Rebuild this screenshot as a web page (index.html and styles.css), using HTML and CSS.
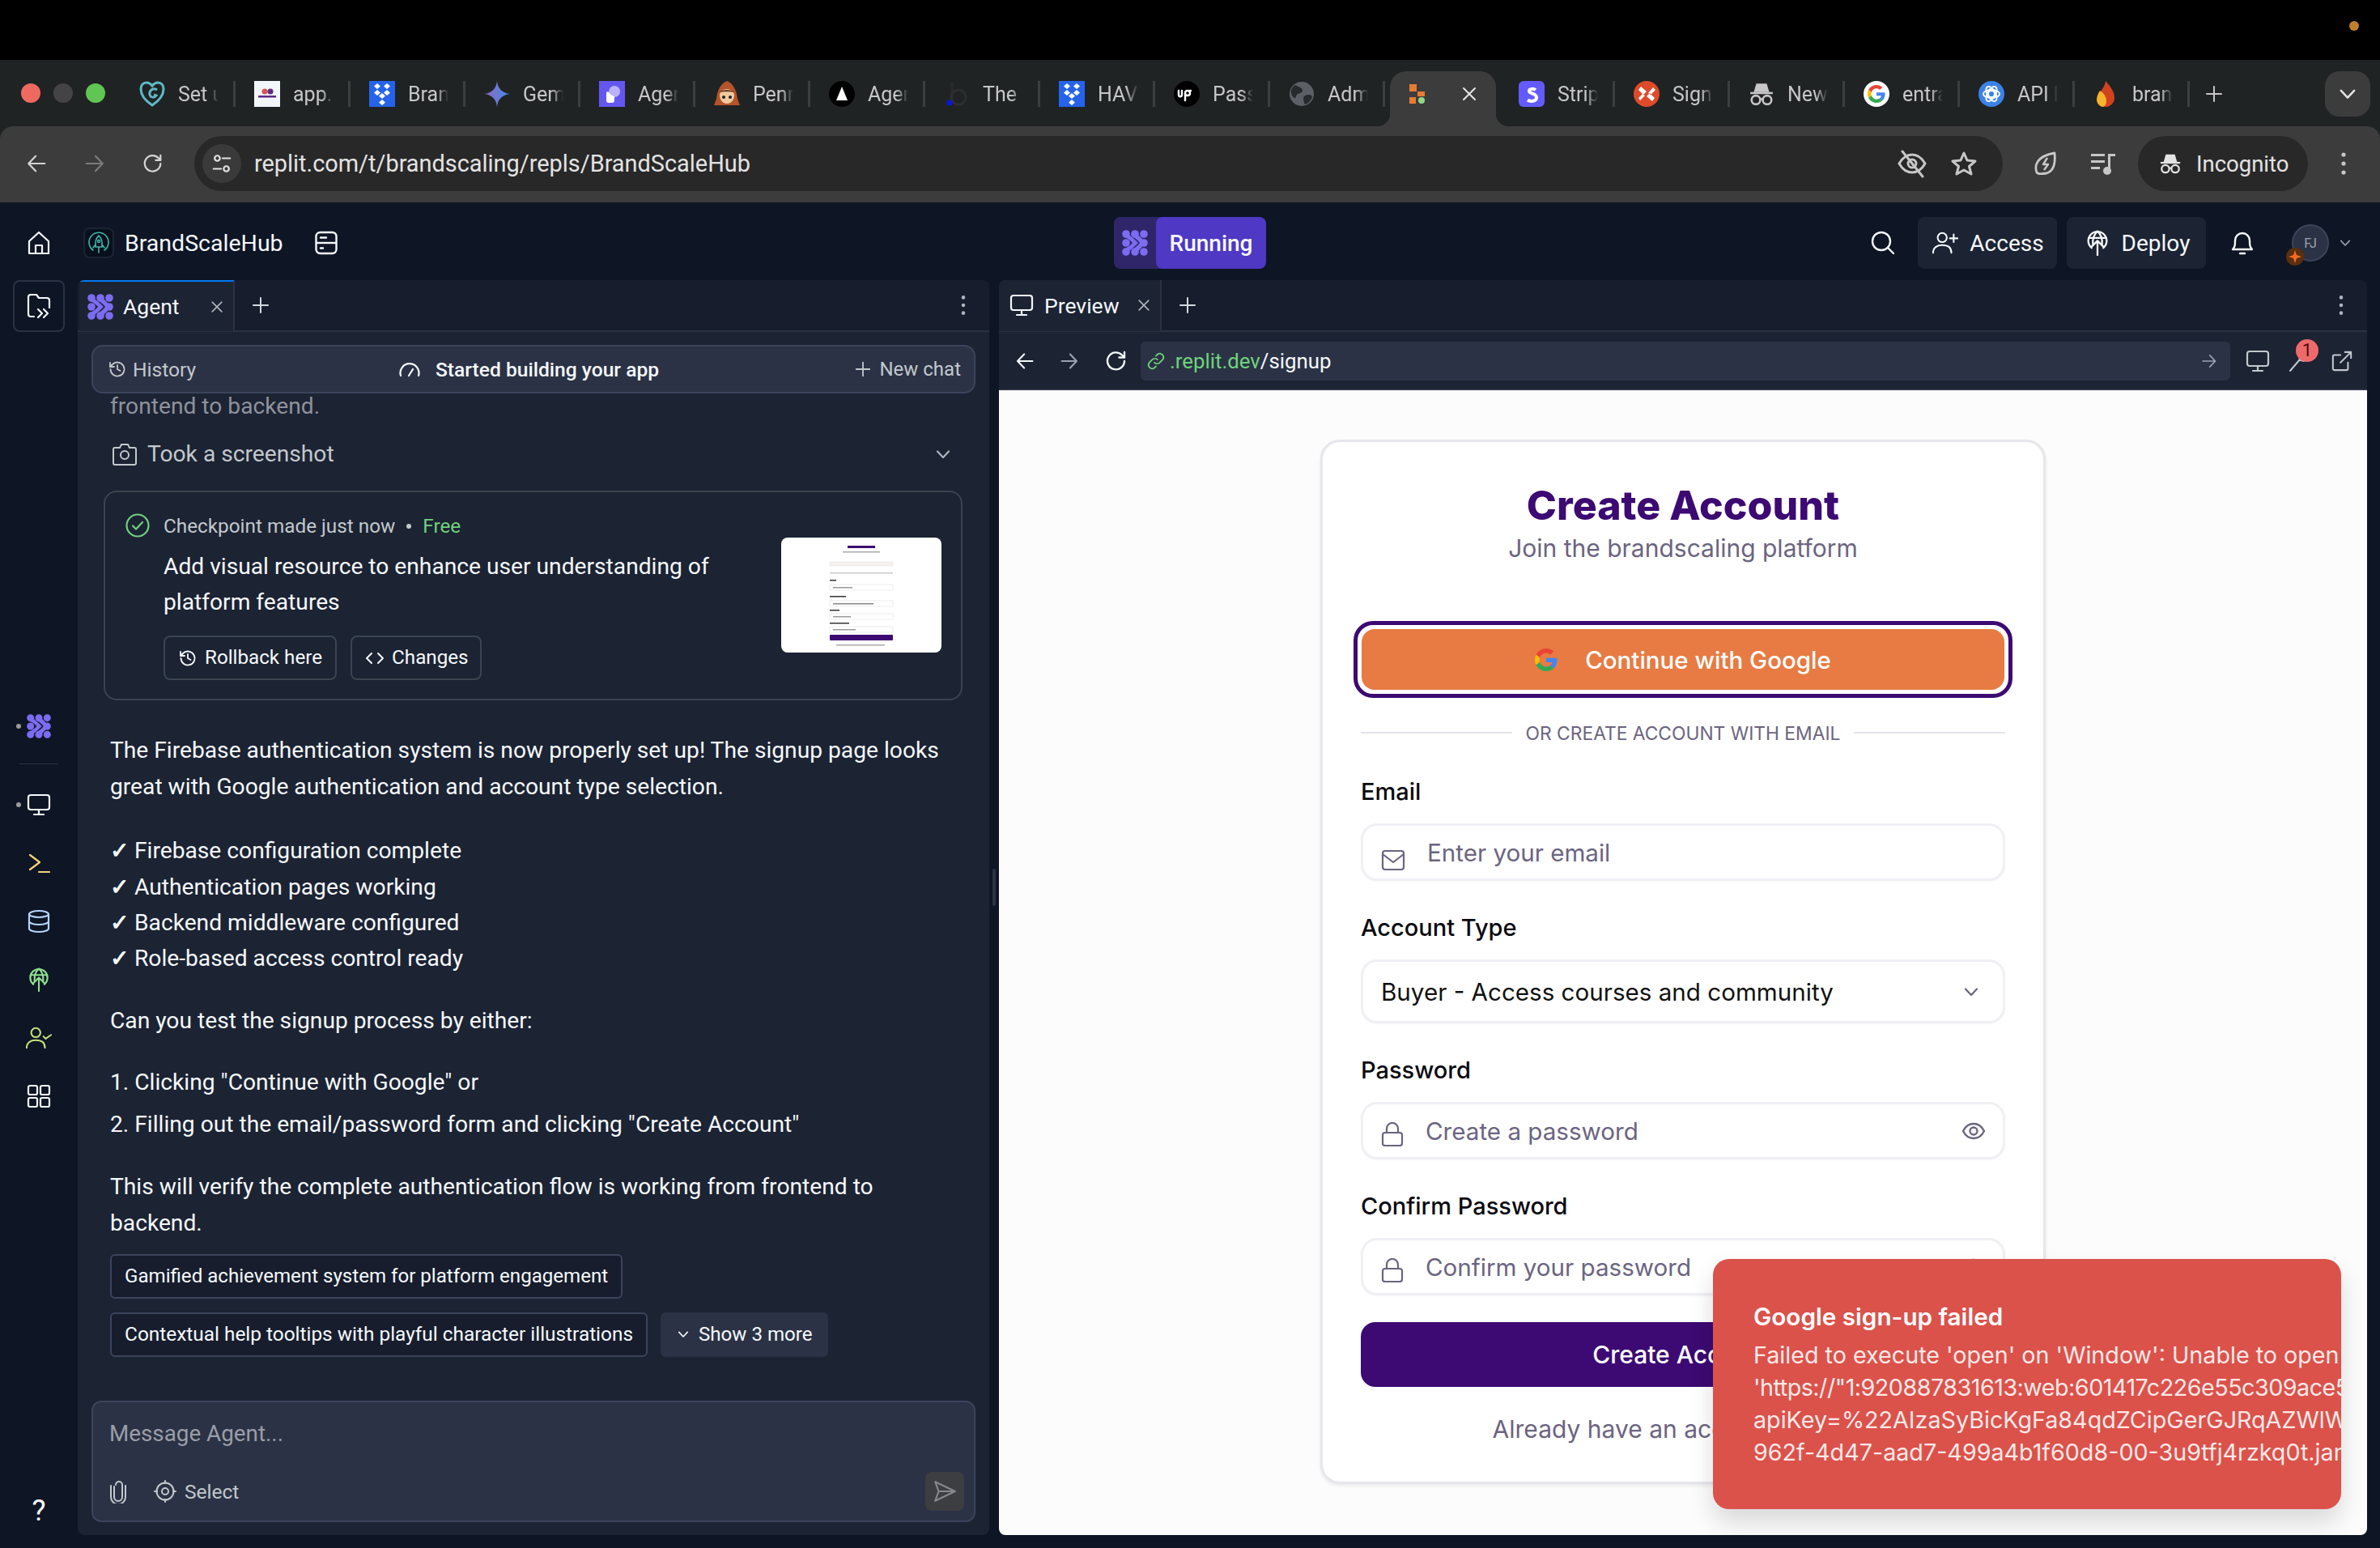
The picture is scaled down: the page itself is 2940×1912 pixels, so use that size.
FILE: index.html
```html
<!DOCTYPE html>
<html lang="en">
<head>
  <meta charset="UTF-8" />
  <title>BrandScaleHub - Replit</title>
  <link rel="stylesheet" href="styles.css">
</head>
<body>
  <svg class="defs" width="0" height="0">
    <defs>
      <symbol id="agent" viewBox="0 0 32 32">
        <g fill="currentColor">
          <circle cx="5" cy="5" r="4.8"/><circle cx="16" cy="5" r="4.8"/><circle cx="27" cy="5" r="4.8"/>
          <circle cx="5" cy="16" r="4.8"/><circle cx="27" cy="16" r="4.8"/>
          <circle cx="5" cy="27" r="4.8"/><circle cx="16" cy="27" r="4.8"/><circle cx="27" cy="27" r="4.8"/>
          <path d="M2 8c2-3 6-3 8-1 4 3 7 6 10 9-3 3-6 6-10 9-2 2-6 2-8-1 5-3 9-5 11-8-2-3-6-5-11-8z"/>
          <path d="M13 8c2-3 6-3 8-1 3 3 6 6 8 9-2 3-5 6-8 9-2 2-6 2-8-1 4-3 7-5 9-8-2-3-5-5-9-8z"/>
        </g>
      </symbol>
      <symbol id="dbx" viewBox="0 0 32 32">
        <rect width="32" height="32" fill="#2563eb"/>
        <g fill="#fff"><path d="M10 3l4 3.5-4 3.5-4-3.5zM22 3l4 3.5-4 3.5-4-3.5zM10 11l4 3.5-4 3.5-4-3.5zM22 11l4 3.5-4 3.5-4-3.5zM16 15l4 3.5-4 3.5-4-3.5zM16 23l4 3.5-4 3.5-4-3.5z"/></g>
      </symbol>
      <symbol id="monitor" viewBox="0 0 30 30" fill="none" stroke="currentColor" stroke-width="2.2" stroke-linejoin="round" stroke-linecap="round">
        <rect x="2" y="3" width="26" height="18" rx="3"/><path d="M15 21v6M9 27h12"/>
      </symbol>
      <symbol id="deploy" viewBox="0 0 24 31" fill="none" stroke="currentColor" stroke-width="2.2" stroke-linejoin="round" stroke-linecap="round">
        <path d="M5 21.500A11 11 0 1 1 19 21.500"/><path d="M1.500 9.500h21"/><path d="M6.500 17C6 10 8 5 12 1.500c4 3.500 6 8.500 5.500 15.500"/><path d="M12 30V13M5 20l7-7 7 7"/>
      </symbol>
      <symbol id="history" viewBox="0 0 24 24" fill="none" stroke="currentColor" stroke-width="1.8" stroke-linecap="round" stroke-linejoin="round">
        <path d="M3.500 12a8.500 8.500 0 1 0 2.500-6L3 9"/><path d="M3 4v5h5"/><path d="M12 7v5l3.500 2"/>
      </symbol>
      <symbol id="lock" viewBox="0 0 28 30" fill="none" stroke="currentColor" stroke-width="2.2" stroke-linecap="round" stroke-linejoin="round">
        <rect x="2" y="13" width="24" height="16" rx="3"/><path d="M7 13V8a7 7 0 0 1 14 0v5"/>
      </symbol>
      <symbol id="eye" viewBox="0 0 30 30" fill="none" stroke="currentColor" stroke-width="2.4" stroke-linecap="round" stroke-linejoin="round">
        <path d="M2 15c3-6 8-9 13-9s10 3 13 9c-3 6-8 9-13 9S5 21 2 15z"/><circle cx="15" cy="15" r="4.5"/>
      </symbol>
      <symbol id="chev" viewBox="0 0 24 24" fill="none" stroke="currentColor" stroke-width="2.2" stroke-linecap="round" stroke-linejoin="round">
        <path d="M5 8.500l7 7.500 7-7.500"/>
      </symbol>
      <symbol id="close" viewBox="0 0 24 24" fill="none" stroke="currentColor" stroke-width="2" stroke-linecap="round">
        <path d="M5 5l14 14M19 5L5 19"/>
      </symbol>
      <symbol id="plus" viewBox="0 0 24 24" fill="none" stroke="currentColor" stroke-width="2" stroke-linecap="round">
        <path d="M12 3v18M3 12h18"/>
      </symbol>
      <symbol id="dots" viewBox="0 0 8 32" fill="currentColor">
        <circle cx="4" cy="5" r="2.6"/><circle cx="4" cy="16" r="2.6"/><circle cx="4" cy="27" r="2.6"/>
      </symbol>
      <symbol id="left" viewBox="0 0 28 28" fill="none" stroke="currentColor" stroke-width="2.4" stroke-linecap="round" stroke-linejoin="round">
        <path d="M25 14H4M13 4L3.500 14 13 24"/>
      </symbol>
      <symbol id="reload" viewBox="0 0 28 28" fill="none" stroke="currentColor" stroke-width="2.4" stroke-linecap="round" stroke-linejoin="round">
        <path d="M24 14a10.500 10.500 0 1 1-3-7.500l3 3"/><path d="M24 3v6.500h-6.500"/>
      </symbol>
      <symbol id="spy" viewBox="0 0 30 30">
        <path d="M9 3h12l3 10H6z" fill="currentColor"/><path d="M2 14h26" stroke="currentColor" stroke-width="2.4"/>
        <g fill="none" stroke="currentColor" stroke-width="2.4"><circle cx="8.500" cy="22" r="5"/><circle cx="21.500" cy="22" r="5"/><path d="M13 21h4"/></g>
      </symbol>
      <symbol id="glogo" viewBox="0 0 48 48">
        <path fill="#ea4335" d="M24 9.500c3.500 0 6.700 1.300 9.100 3.500l6.800-6.800C35.800 2.400 30.300 0 24 0 14.600 0 6.500 5.400 2.600 13.200l7.900 6.200C12.400 13.700 17.700 9.500 24 9.500z"/>
        <path fill="#4285f4" d="M47 24.500c0-1.600-.1-3.100-.4-4.500H24v9h12.900c-.6 3-2.200 5.500-4.800 7.200l7.700 6C44.400 38 47 31.800 47 24.500z"/>
        <path fill="#fbbc05" d="M10.500 28.600c-.5-1.400-.8-3-.8-4.600s.3-3.200.8-4.600l-7.900-6.200C1 16.500 0 20.100 0 24s1 7.500 2.600 10.800z"/>
        <path fill="#34a853" d="M24 48c6.500 0 11.900-2.100 15.800-5.800l-7.700-6c-2.100 1.400-4.900 2.300-8.100 2.300-6.300 0-11.600-4.200-13.500-9.900l-7.900 6.200C6.500 42.600 14.600 48 24 48z"/>
      </symbol>
    </defs>
  </svg>

  <div class="notch"><span class="cam-dot"></span></div>

  <div class="browser">
    <div class="tabstrip">
      <div class="lights"><i class="red"></i><i class="off"></i><i class="green"></i></div>
      <div class="tab"><svg class="fav" viewBox="0 0 32 32" fill="none" stroke="#5fb9c6" stroke-width="3"><path d="M16 30C7 24 2 17 2 10c0-5 3-8 7-8 3 0 5 1.500 7 4 2-2.500 4-4 7-4 4 0 7 3 7 8 0 7-5 14-14 20z"/><path d="M22 11c-4-3-10 0-9 6 1 4 6 4 8 1l-3-1"/></svg><span>Set up</span></div>
      <div class="tab"><svg class="fav" viewBox="0 0 32 32"><rect width="32" height="32" fill="#f1f7fa"/><circle cx="13" cy="13" r="3.500" fill="#d9534f"/><circle cx="20" cy="13" r="3.500" fill="#5b2a86"/><rect x="5" y="18" width="22" height="2.500" fill="#5b2a86"/></svg><span>app.br</span></div>
      <div class="tab"><svg class="fav"><use href="#dbx"/></svg><span>Brand</span></div>
      <div class="tab"><svg class="fav" viewBox="0 0 32 32"><defs><linearGradient id="gem" x1="0" x2="1"><stop offset="0" stop-color="#9168c0"/><stop offset="1" stop-color="#3f8ce6"/></linearGradient></defs><path d="M16 0c1 9 6 15 16 16-10 1-15 7-16 16-1-9-6-15-16-16C10 15 15 9 16 0z" fill="url(#gem)"/></svg><span>Gemini</span></div>
      <div class="tab"><svg class="fav" viewBox="0 0 32 32"><rect width="32" height="32" fill="#6457f0"/><circle cx="19" cy="13" r="7" fill="#b9b4fa"/><path d="M9 15c0-2 2-2 3-1 2 3 4 4 7 5v5c0 2-1 3-3 3h-4c-2 0-3-1-3-3z" fill="#fff"/></svg><span>Agent</span></div>
      <div class="tab"><svg class="fav" viewBox="0 0 32 32"><path d="M16 0c8 3 12 12 13 22l3 8H0l3-8C4 12 8 3 16 0z" fill="#b5532a"/><path d="M7 18c0-5 4-8 9-8s9 3 9 8-4 10-9 10-9-5-9-10z" fill="#f0c9a0"/><path d="M6 14c4-4 16-4 20 0-4-1-16-1-20 0z" fill="#6b3a1f"/><circle cx="12" cy="20" r="2" fill="#222"/><circle cx="20" cy="20" r="2" fill="#222"/></svg><span>Penn</span></div>
      <div class="tab"><svg class="fav" viewBox="0 0 32 32"><circle cx="16" cy="16" r="16" fill="#000"/><path d="M16 7l7 17H9z" fill="#fff"/></svg><span>Agent</span></div>
      <div class="tab"><svg class="fav" viewBox="0 0 32 32" fill="none"><path d="M10 1v24" stroke="#2b2b2b" stroke-width="3"/><circle cx="18" cy="20" r="9" stroke="#2e2e2e" stroke-width="3"/><circle cx="7" cy="27" r="3.500" fill="#0a14e0"/></svg><span>The</span></div>
      <div class="tab"><svg class="fav"><use href="#dbx"/></svg><span>HAVE</span></div>
      <div class="tab"><svg class="fav" viewBox="0 0 32 32"><circle cx="16" cy="16" r="16" fill="#000"/><path d="M6 12v5c0 3 4 3 4 0v-5M14 24V15c0-4 6-4 6 0s-6 4-6 0M20 12h1" fill="none" stroke="#fff" stroke-width="2.400" stroke-linecap="round"/></svg><span>Passw</span></div>
      <div class="tab"><svg class="fav" viewBox="0 0 32 32"><circle cx="16" cy="16" r="15" fill="#5c6066"/><path d="M8 5c5 3 9 3 9 7s-7 2-8 7-5 0-6-4 2-8 5-10zM20 18c4-2 8-1 9 1-1 5-5 9-9 10-2-4-3-9 0-11z" fill="#27292c"/></svg><span>Admin</span></div>
      <div class="tab active"><svg class="fav" viewBox="0 0 20 24"><rect x="0" y="0" width="9" height="9" fill="#e77b32"/><rect x="10" y="9" width="9" height="6" fill="#e77b32"/><rect x="0" y="16" width="8" height="8" fill="#e77b32"/><ellipse cx="15" cy="20" rx="4" ry="4" fill="#8fd98a"/></svg><svg class="tab-x"><use href="#close"/></svg></div>
      <div class="tab"><svg class="fav" viewBox="0 0 32 32"><rect width="32" height="32" rx="6" fill="#635bff"/><path d="M21 11c-2-1.500-8-2-8 1.500s9 2.500 9 8-8 5-11 3" fill="none" stroke="#fff" stroke-width="4"/></svg><span>Stripe</span></div>
      <div class="tab"><svg class="fav" viewBox="0 0 32 32"><circle cx="16" cy="16" r="16" fill="#dd4b2a"/><path d="M9 7l7 6-4 4-6-6zM23 25l-7-6 4-4 6 6zM24 8l-6 7 3 2 6-6zM8 24l6-6-3-2-5 5z" fill="#fff"/></svg><span>Sign</span></div>
      <div class="tab spy"><svg class="fav"><use href="#spy"/></svg><span>New</span></div>
      <div class="tab"><svg class="fav" viewBox="0 0 32 32"><circle cx="16" cy="16" r="16" fill="#fff"/><svg x="5" y="5" width="22" height="22"><use href="#glogo"/></svg></svg><span>entra</span></div>
      <div class="tab"><svg class="fav" viewBox="0 0 32 32"><circle cx="16" cy="16" r="16" fill="#3b82e8"/><g fill="none" stroke="#fff" stroke-width="1.800"><circle cx="16" cy="16" r="4"/><ellipse cx="16" cy="16" rx="10" ry="5"/><ellipse cx="16" cy="16" rx="10" ry="5" transform="rotate(60 16 16)"/><ellipse cx="16" cy="16" rx="10" ry="5" transform="rotate(120 16 16)"/></g></svg><span>API k</span></div>
      <div class="tab"><svg class="fav" viewBox="0 0 32 32"><path d="M15 0c6 7 11 13 11 21 0 6-5 11-11 11-5 0-9-4-9-9 0-9 8-14 9-23z" fill="#d1431f"/><path d="M8 12c5 3 8 8 8 13 0 4-2 7-5 7-4-1-7-5-7-9 0-4 2-8 4-11z" fill="#f5b32e"/></svg><span>brand</span></div>
      <svg class="strip-plus"><use href="#plus"/></svg>
      <div class="tab-search"><svg><use href="#chev"/></svg></div>
    </div>

    <div class="toolbar">
      <svg class="nav"><use href="#left"/></svg>
      <svg class="nav dim flip"><use href="#left"/></svg>
      <svg class="nav"><use href="#reload"/></svg>
      <div class="omnibox">
        <span class="tune"><svg viewBox="0 0 28 28" fill="none" stroke="currentColor" stroke-width="2.400" stroke-linecap="round"><circle cx="8" cy="7" r="3.500"/><path d="M15 7h10M3 21h10"/><circle cx="20" cy="21" r="3.500"/></svg></span>
        <span class="url">replit.com/t/brandscaling/repls/BrandScaleHub</span>
        <svg class="omni-icon" viewBox="0 0 36 36" fill="none" stroke="currentColor" stroke-width="3" stroke-linecap="round"><path d="M2 18c4-7 10-11 16-11s12 4 16 11c-4 7-10 11-16 11S6 25 2 18z"/><circle cx="18" cy="18" r="5"/><path d="M6 3l25 31"/></svg>
        <svg class="omni-icon star" viewBox="0 0 32 32" fill="none" stroke="currentColor" stroke-width="3" stroke-linejoin="round"><path d="M16 3l4 9 10 1-7.500 6.500L25 29l-9-5-9 5 2.500-9.500L2 13l10-1z"/></svg>
      </div>
      <svg class="tool-icon leaf" viewBox="0 0 30 32" fill="none" stroke="currentColor" stroke-width="2.800" stroke-linejoin="round"><path d="M27 3c1 10 0 22-10 25-6 1-11 1-12-1-3-8-1-20 22-24z"/><path d="M18 9l-5 8h6l-5 7" stroke-width="2.400"/></svg>
      <svg class="tool-icon media" viewBox="0 0 30 30" fill="currentColor"><rect x="0" y="3" width="17" height="3"/><rect x="0" y="11" width="17" height="3"/><rect x="0" y="19" width="11" height="3"/><rect x="21" y="3" width="3" height="20"/><rect x="21" y="3" width="9" height="3"/><ellipse cx="20" cy="24" rx="5" ry="5"/></svg>
      <div class="incognito"><svg><use href="#spy"/></svg><span>Incognito</span></div>
      <svg class="chrome-menu"><use href="#dots"/></svg>
    </div>
  </div>

  <div class="app">
    <header class="topbar">
      <div class="top-left">
        <svg class="home" viewBox="0 0 28 30" fill="none" stroke="currentColor" stroke-width="2.200" stroke-linejoin="round"><path d="M2 13L14 2l12 11v15H2z"/><path d="M10 28V18h8v10"/></svg>
        <span class="repl-logo"><svg viewBox="0 0 28 28" fill="none" stroke="#45b5a8" stroke-width="1.600" stroke-linecap="round"><path d="M7 23A12 12 0 1 1 21 23"/><path d="M14 5c-3 3-4 6-4 9v5h8v-5c0-3-1-6-4-9zM10 16l-3 4M18 16l3 4M14 19v7"/><circle cx="14" cy="12" r="1.500"/></svg></span>
        <span class="repl-name">BrandScaleHub</span>
        <svg class="server" viewBox="0 0 28 30" fill="none" stroke="currentColor" stroke-width="2.400"><rect x="1.500" y="2" width="25" height="26" rx="5"/><path d="M2 15h24"/><path d="M7 8.500h7M7 21.500h3" stroke-linecap="round"/></svg>
      </div>
      <div class="run-pill">
        <span class="run-icon"><svg><use href="#agent"/></svg></span>
        <span class="run-label">Running</span>
      </div>
      <div class="top-right">
        <svg class="search" viewBox="0 0 30 30" fill="none" stroke="currentColor" stroke-width="2.400" stroke-linecap="round"><circle cx="13" cy="13" r="11"/><path d="M21 21l7 7"/></svg>
        <button class="top-btn"><svg viewBox="0 0 34 30" fill="none" stroke="currentColor" stroke-width="2.200" stroke-linecap="round"><circle cx="13" cy="8" r="6"/><path d="M1 28c0-7 5-10 12-10s12 3 12 10M28 4v10M23 9h10"/></svg>Access</button>
        <button class="top-btn"><svg><use href="#deploy"/></svg>Deploy</button>
        <svg class="bell" viewBox="0 0 30 32" fill="none" stroke="currentColor" stroke-width="2.400" stroke-linejoin="round" stroke-linecap="round"><path d="M3 24c3-3 3-6 3-11a9 9 0 0 1 18 0c0 5 0 8 3 11z"/><path d="M12 29h6"/></svg>
        <div class="avatar"><span>FJ</span><svg class="avatar-badge" viewBox="0 0 22 22"><circle cx="11" cy="11" r="11" fill="#5a2f10"/><path d="M11 3l2 6 6 2-6 2-2 6-2-6-6-2 6-2z" fill="#f26b21"/></svg></div>
        <svg class="avatar-chev"><use href="#chev"/></svg>
      </div>
    </header>

    <div class="workspace">
      <nav class="rail">
        <div class="rail-file"><svg viewBox="0 0 30 32" fill="none" stroke="currentColor" stroke-width="2.200" stroke-linecap="round" stroke-linejoin="round"><path d="M9 29H5a3 3 0 0 1-3-3V5a3 3 0 0 1 3-3h7l3 4h10a3 3 0 0 1 3 3v9"/><path d="M14 20l5 5-5 5M21 20l5 5-5 5"/></svg></div>
        <div class="rail-tools">
          <div class="rail-item first"><i></i><svg class="purple"><use href="#agent"/></svg></div>
          <hr>
          <div class="rail-item"><i></i><svg class="white"><use href="#monitor"/></svg></div>
          <div class="rail-item"><svg class="yellow" viewBox="0 0 30 30" fill="none" stroke="currentColor" stroke-width="2.200" stroke-linecap="round" stroke-linejoin="round"><path d="M4 5l12 9-12 9M15 26h13"/></svg></div>
          <div class="rail-item"><svg class="blue" viewBox="0 0 30 30" fill="none" stroke="currentColor" stroke-width="2.200"><ellipse cx="15" cy="6" rx="12" ry="4"/><path d="M3 6v18c0 2 5 4 12 4s12-2 12-4V6M3 15c0 2 5 4 12 4s12-2 12-4"/></svg></div>
          <div class="rail-item"><svg class="green"><use href="#deploy"/></svg></div>
          <div class="rail-item"><svg class="lime" viewBox="0 0 34 30" fill="none" stroke="currentColor" stroke-width="2.200" stroke-linecap="round" stroke-linejoin="round"><circle cx="13" cy="8" r="6"/><path d="M1 28c0-7 5-10 12-10s12 3 12 10M23 13l3 3 7-5"/></svg></div>
          <div class="rail-item"><svg class="white" viewBox="0 0 30 30" fill="none" stroke="currentColor" stroke-width="2.200"><rect x="2" y="2" width="11" height="11" rx="2"/><rect x="17" y="2" width="11" height="11" rx="2"/><rect x="2" y="17" width="11" height="11" rx="2"/><rect x="17" y="17" width="11" height="11" rx="2"/></svg></div>
        </div>
        <span class="rail-help">?</span>
      </nav>

      <section class="panel agent-panel">
        <div class="panel-tabs">
          <div class="panel-tab agent-tab"><svg class="tab-agent"><use href="#agent"/></svg><span>Agent</span><svg class="tab-close"><use href="#close"/></svg></div>
          <svg class="tab-plus"><use href="#plus"/></svg>
          <svg class="panel-dots"><use href="#dots"/></svg>
        </div>

        <div class="historybar">
          <span class="hist-left"><svg><use href="#history"/></svg>History</span>
          <span class="hist-mid"><svg viewBox="0 0 28 24" fill="none" stroke="currentColor" stroke-width="2.200" stroke-linecap="round"><path d="M3 20A11.500 11.500 0 1 1 25 20"/><path d="M13 20l5-8"/></svg>Started building your app</span>
          <span class="hist-right"><svg><use href="#plus"/></svg>New chat</span>
        </div>

        <div class="chat">
          <p class="faded">frontend to backend.</p>
          <div class="shot-row">
            <svg class="cam" viewBox="0 0 32 30" fill="none" stroke="currentColor" stroke-width="2"><path d="M2 9a2 2 0 0 1 2-2h6l2-4h8l2 4h6a2 2 0 0 1 2 2v17a2 2 0 0 1-2 2H4a2 2 0 0 1-2-2z"/><circle cx="16" cy="16" r="5"/></svg>
            <span>Took a screenshot</span>
            <svg class="shot-chev"><use href="#chev"/></svg>
          </div>

          <div class="checkpoint">
            <svg class="check" viewBox="0 0 30 30" fill="none" stroke="#6fd27c" stroke-width="2.200" stroke-linecap="round" stroke-linejoin="round"><circle cx="15" cy="15" r="13.500"/><path d="M9 15.500l4 4 8-8.500"/></svg>
            <div class="cp-body">
              <div class="cp-meta">Checkpoint made just now<i></i><b>Free</b></div>
              <div class="cp-title">Add visual resource to enhance user understanding of platform features</div>
              <div class="cp-actions">
                <button><svg><use href="#history"/></svg>Rollback here</button>
                <button><svg viewBox="0 0 24 24" fill="none" stroke="currentColor" stroke-width="2" stroke-linecap="round" stroke-linejoin="round"><path d="M8 6l-6 6 6 6M16 6l6 6-6 6"/></svg>Changes</button>
              </div>
            </div>
            <div class="thumb">
              <svg viewBox="0 0 198 142">
                <rect x="82" y="10" width="34" height="3" fill="#3c0a72"/>
                <rect x="76" y="17" width="46" height="1.500" fill="#aaa"/>
                <rect x="60" y="30" width="78" height="5" fill="#f6f2ee" stroke="#ddd" stroke-width=".5"/>
                <rect x="60" y="43" width="78" height="1.500" fill="#ccc"/>
                <rect x="60" y="52" width="8" height="1.500" fill="#333"/>
                <rect x="60" y="58" width="78" height="7" fill="#fff" stroke="#eee"/><rect x="64" y="61" width="24" height="1.500" fill="#999"/>
                <rect x="60" y="72" width="20" height="1.500" fill="#333"/>
                <rect x="60" y="78" width="78" height="7" fill="#fff" stroke="#eee"/><rect x="64" y="81" width="50" height="1.500" fill="#888"/>
                <rect x="60" y="89" width="12" height="1.500" fill="#333"/>
                <rect x="60" y="94" width="78" height="7" fill="#fff" stroke="#eee"/><rect x="64" y="97" width="22" height="1.500" fill="#999"/>
                <rect x="60" y="105" width="24" height="1.500" fill="#333"/>
                <rect x="60" y="110" width="78" height="7" fill="#fff" stroke="#eee"/><rect x="64" y="113" width="28" height="1.500" fill="#999"/>
                <rect x="60" y="120" width="78" height="7" rx="1" fill="#3c0a72"/>
                <rect x="68" y="132" width="60" height="1.500" fill="#aaa"/>
              </svg>
            </div>
          </div>

          <p class="para first">The Firebase authentication system is now properly set up! The signup page looks great with Google authentication and account type selection.</p>
          <p class="para checks"><b>✓</b> Firebase configuration complete<br><b>✓</b> Authentication pages working<br><b>✓</b> Backend middleware configured<br><b>✓</b> Role-based access control ready</p>
          <p class="para">Can you test the signup process by either:</p>
          <ol class="steps">
            <li>1. Clicking "Continue with Google" or</li>
            <li>2. Filling out the email/password form and clicking "Create Account"</li>
          </ol>
          <p class="para">This will verify the complete authentication flow is working from frontend to backend.</p>

          <div class="suggest-row"><button class="suggest">Gamified achievement system for platform engagement</button></div>
          <div class="suggest-row">
            <button class="suggest wide">Contextual help tooltips with playful character illustrations</button>
            <button class="suggest more"><svg><use href="#chev"/></svg>Show 3 more</button>
          </div>
        </div>

        <div class="composer">
          <div class="composer-ph">Message Agent...</div>
          <div class="composer-foot">
            <svg class="clip" viewBox="0 0 22 30" fill="none" stroke="currentColor" stroke-width="2" stroke-linecap="round"><path d="M6 9v13a5 5 0 0 0 10 0V7a4 4 0 0 0-8 0"/><path d="M2 8v14a9 9 0 0 0 18 0V8" /></svg>
            <span class="select"><svg viewBox="0 0 28 28" fill="none" stroke="currentColor" stroke-width="2" stroke-linecap="round"><circle cx="14" cy="14" r="10.500"/><circle cx="14" cy="14" r="4"/><path d="M14 1v3M14 24v3M1 14h3M24 14h3"/></svg>Select</span>
            <span class="send"><svg viewBox="0 0 28 28" fill="none" stroke="currentColor" stroke-width="2" stroke-linejoin="round"><path d="M3 3l23 11L3 25l4-11zM7 14h19"/></svg></span>
          </div>
        </div>
      </section>

      <div class="resizer"><i></i></div>

      <section class="panel preview-panel">
        <div class="panel-tabs">
          <div class="panel-tab preview-tab"><svg class="tab-mon"><use href="#monitor"/></svg><span>Preview</span><svg class="tab-close"><use href="#close"/></svg></div>
          <svg class="tab-plus"><use href="#plus"/></svg>
          <svg class="panel-dots"><use href="#dots"/></svg>
        </div>
        <div class="urlbar">
          <svg class="pv-nav"><use href="#left"/></svg>
          <svg class="pv-nav dim flip"><use href="#left"/></svg>
          <svg class="pv-reload"><use href="#reload"/></svg>
          <div class="pv-url">
            <svg class="link" viewBox="0 0 24 24" fill="none" stroke="currentColor" stroke-width="2" stroke-linecap="round"><path d="M10 14a5 5 0 0 0 7 0l4-4a5 5 0 0 0-7-7l-2 2"/><path d="M14 10a5 5 0 0 0-7 0l-4 4a5 5 0 0 0 7 7l2-2"/></svg>
            <span class="host">.replit.dev</span><span class="path">/signup</span>
            <svg class="go flip"><use href="#left"/></svg>
          </div>
          <svg class="pv-tool mon"><use href="#monitor"/></svg>
          <span class="wrench"><svg viewBox="0 0 24 28" fill="none" stroke="currentColor" stroke-width="2" stroke-linecap="round" stroke-linejoin="round"><path d="M3 26L15 12M15 12c-2-4 1-9 6-8l-3 4 1 3 3 0 1-3c1 5-3 8-8 4z"/></svg><b>1</b></span>
          <svg class="pv-tool ext" viewBox="0 0 28 28" fill="none" stroke="currentColor" stroke-width="2.200" stroke-linecap="round" stroke-linejoin="round"><path d="M22 16v8a2 2 0 0 1-2 2H4a2 2 0 0 1-2-2V8a2 2 0 0 1 2-2h8M12 16L26 2M18 2h8v8"/></svg>
        </div>

        <div class="page">
          <div class="card">
            <h1>Create Account</h1>
            <p class="sub">Join the brandscaling platform</p>

            <div class="google-ring">
              <button class="google-btn"><svg><use href="#glogo"/></svg>Continue with Google</button>
            </div>

            <div class="divider"><span>OR CREATE ACCOUNT WITH EMAIL</span></div>

            <label class="field-label">Email</label>
            <div class="field"><svg class="field-icon mail" viewBox="0 0 30 28" fill="none" stroke="currentColor" stroke-width="2.200" stroke-linejoin="round"><rect x="2" y="3" width="26" height="23" rx="3"/><path d="M2 7l13 10L28 7"/></svg><span>Enter your email</span></div>

            <label class="field-label">Account Type</label>
            <div class="field select-field"><span>Buyer - Access courses and community</span><svg class="sel-chev"><use href="#chev"/></svg></div>

            <label class="field-label">Password</label>
            <div class="field"><svg class="field-icon lock"><use href="#lock"/></svg><span>Create a password</span><svg class="field-eye"><use href="#eye"/></svg></div>

            <label class="field-label">Confirm Password</label>
            <div class="field"><svg class="field-icon lock"><use href="#lock"/></svg><span>Confirm your password</span><svg class="field-eye"><use href="#eye"/></svg></div>

            <button class="submit">Create Account</button>
            <p class="signin">Already have an account? <a>Sign in</a></p>
          </div>

          <div class="toast">
            <div class="toast-title">Google sign-up failed</div>
            <div class="toast-line">Failed to execute 'open' on 'Window': Unable to open</div>
            <div class="toast-line tight">'https://"1:920887831613:web:601417c226e55c309ace5f5d</div>
            <div class="toast-line">apiKey=%22AIzaSyBicKgFa84qdZCipGerGJRqAZWlW2c5</div>
            <div class="toast-line">962f-4d47-aad7-499a4b1f60d8-00-3u9tfj4rzkq0t.janeway</div>
          </div>
        </div>
      </section>
    </div>
  </div>
</body>
</html>
```

FILE: styles.css
```css
:root {
  --app-bg: #0e1525;
  --panel: #1c2333;
  --panel-dark: #171d2d;
  --raised: #2b3245;
  --line: #3c445c;
  --purple: #3c0a72;
  --muted: #6b6480;
  --agent: #7c6cf0;
}
* {
  box-sizing: border-box;
}
html, body {
  margin: 0;
  padding: 0;
  height: 1912px;
  overflow: hidden;
}
body {
  width: 2940px;
  background: #000;
  font-family: Roboto, "Liberation Sans", sans-serif;
  display: flex;
  flex-direction: column;
}
button {
  font: inherit;
  color: inherit;
  cursor: pointer;
}
p, h1, ol {
  margin: 0;
  padding: 0;
}
svg {
  display: block;
  flex: none;
}
.defs {
  position: absolute;
}

/* mac notch strip */
.notch {
  height: 74px;
  background: #000;
  display: flex;
  justify-content: flex-end;
  align-items: center;
  padding-right: 26px;
  padding-bottom: 10px;
}
.cam-dot {
  width: 12px;
  height: 12px;
  border-radius: 50%;
  background: #c17f2e;
}

/* browser chrome */
.browser {
  background: #202324;
}
.tabstrip {
  height: 82px;
  display: flex;
  align-items: flex-start;
  padding-left: 26px;
  position: relative;
}
.lights {
  display: flex;
  gap: 16px;
  width: 123px;
  padding-top: 29px;
}
.lights i {
  width: 24px;
  height: 24px;
  border-radius: 50%;
}
.lights .red { background: #ee6a5f; }
.lights .off { background: #444; }
.lights .green { background: #61c554; }
.tab {
  width: 142px;
  height: 32px;
  margin-top: 26px;
  padding-left: 23px;
  display: flex;
  align-items: center;
  gap: 16px;
  border-right: 3px solid #3c3f40;
  color: #c7c7c7;
  font-size: 25px;
}
.tab span {
  width: 50px;
  overflow: hidden;
  white-space: nowrap;
  -webkit-mask-image: linear-gradient(to right, #000 70%, transparent);
  mask-image: linear-gradient(to right, #000 70%, transparent);
}
.fav {
  width: 32px;
  height: 32px;
}
.tab.spy .fav {
  color: #c7c7c7;
}
.tab.active {
  width: 131px;
  height: 68px;
  margin: 14px 5px 0 6px;
  padding: 16px 0 0 24px;
  border: 0;
  border-radius: 20px 20px 0 0;
  background: #3c3c3c;
  position: relative;
  align-items: flex-start;
  gap: 42px;
}
.tab.active .fav {
  width: 20px;
  height: 24px;
}
.tab.active::before,
.tab.active::after {
  content: "";
  position: absolute;
  bottom: 0;
  width: 16px;
  height: 16px;
}
.tab.active::before {
  left: -16px;
  background: radial-gradient(circle at 0 0, transparent 16px, #3c3c3c 16.5px);
}
.tab.active::after {
  right: -16px;
  background: radial-gradient(circle at 100% 0, transparent 16px, #3c3c3c 16.5px);
}
.tab-x {
  width: 24px;
  height: 24px;
  color: #e6e6e6;
}
.strip-plus {
  width: 24px;
  height: 24px;
  margin: 30px 0 0 18px;
  color: #c7c7c7;
}
.tab-search {
  position: absolute;
  right: 12px;
  top: 14px;
  width: 56px;
  height: 56px;
  border-radius: 18px;
  background: #3c3c3c;
  color: #e3e3e3;
  display: flex;
  align-items: center;
  justify-content: center;
}
.tab-search svg {
  width: 28px;
  height: 28px;
}
.toolbar {
  height: 94px;
  padding: 0 0 2px 32px;
  background: #3c3c3c;
  border-radius: 16px 16px 0 0;
  display: flex;
  align-items: center;
  color: #c7c7c7;
}
.nav {
  width: 26px;
  height: 26px;
  margin-right: 46px;
  color: #d4d4d4;
}
.nav.dim {
  color: #7b7b7b;
}
.flip {
  transform: scaleX(-1);
}
.toolbar .nav:nth-child(3) {
  margin-right: 38px;
}
.omnibox {
  width: 2234px;
  height: 68px;
  border-radius: 34px;
  background: #282828;
  display: flex;
  align-items: center;
  padding-left: 10px;
}
.tune {
  width: 48px;
  height: 48px;
  border-radius: 50%;
  background: #3a3a3a;
  color: #e3e3e3;
  display: flex;
  align-items: center;
  justify-content: center;
}
.tune svg {
  width: 26px;
  height: 26px;
}
.url {
  margin-left: 16px;
  font-size: 28.9px;
  color: #e3e3e3;
  flex: 1;
}
.omni-icon {
  width: 36px;
  height: 36px;
  color: #c7c7c7;
}
.omni-icon.star {
  width: 32px;
  height: 32px;
  margin: 0 32px 0 30px;
}
.tool-icon {
  width: 30px;
  height: 32px;
}
.tool-icon.leaf {
  margin-left: 37px;
}
.tool-icon.media {
  margin-left: 42px;
}
.incognito {
  width: 210px;
  height: 68px;
  margin-left: 28px;
  border-radius: 34px;
  background: #282828;
  color: #e3e3e3;
  font-size: 27.5px;
  display: flex;
  align-items: center;
  gap: 18px;
  padding-left: 26px;
}
.incognito svg {
  width: 28px;
  height: 30px;
}
.chrome-menu {
  width: 8px;
  height: 32px;
  margin-left: 40px;
  color: #c7c7c7;
}

/* replit shell */
.app {
  flex: 1;
  background: var(--app-bg);
  display: flex;
  flex-direction: column;
  color: #f5f9fc;
}
.topbar {
  height: 96px;
  padding-top: 4px;
  display: grid;
  grid-template-columns: 1fr auto 1fr;
  align-items: center;
}
.top-left, .top-right {
  display: flex;
  align-items: center;
}
.top-left {
  padding-left: 34px;
}
.home {
  width: 28px;
  height: 30px;
}
.repl-logo {
  width: 38px;
  height: 38px;
  margin-left: 41px;
  border: 2px solid #1c2333;
  border-radius: 8px;
  background: #07101c;
  display: flex;
  align-items: center;
  justify-content: center;
}
.repl-logo svg {
  width: 28px;
  height: 28px;
}
.repl-name {
  margin-left: 13px;
  font-size: 28.5px;
}
.server {
  width: 28px;
  height: 30px;
  margin-left: 39px;
}
.run-pill {
  display: flex;
  height: 64px;
  width: 188px;
  border-radius: 8px;
  overflow: hidden;
  background: #2e2668;
}
.run-icon {
  width: 52px;
  display: flex;
  align-items: center;
  justify-content: center;
  color: var(--agent);
}
.run-icon svg {
  width: 32px;
  height: 32px;
}
.run-label {
  flex: 1;
  border-radius: 8px;
  background: #4e38c4;
  font-size: 28px;
  font-weight: 500;
  display: flex;
  align-items: center;
  justify-content: center;
}
.top-right {
  justify-content: flex-end;
  padding-right: 34px;
}
.search {
  width: 30px;
  height: 30px;
  margin-right: 28px;
}
.top-btn {
  width: 172px;
  height: 64px;
  margin-right: 12px;
  padding-left: 8px;
  border: 0;
  border-radius: 8px;
  background: var(--panel);
  font-size: 28px;
  display: flex;
  align-items: center;
  justify-content: center;
  gap: 14px;
}
.top-btn svg {
  width: 32px;
  height: 32px;
}
.bell {
  width: 30px;
  height: 32px;
  margin-left: 18px;
}
.avatar {
  width: 46px;
  height: 46px;
  margin-left: 46px;
  border-radius: 50%;
  background: #2b3245;
  border: 2px solid #3c445c;
  color: #9da2b0;
  font-size: 16px;
  display: flex;
  align-items: center;
  justify-content: center;
  position: relative;
}
.avatar-badge {
  position: absolute;
  left: -9px;
  bottom: -7px;
  width: 22px;
  height: 22px;
}
.avatar-chev {
  width: 18px;
  height: 18px;
  margin-left: 11px;
  color: #9da2b0;
}
.workspace {
  flex: 1;
  display: flex;
  padding-bottom: 16px;
}

/* left rail */
.rail {
  width: 96px;
  display: flex;
  flex-direction: column;
  align-items: center;
}
.rail-file {
  width: 64px;
  height: 64px;
  border: 2px solid #2b3245;
  border-radius: 8px;
  display: flex;
  align-items: center;
  justify-content: center;
}
.rail-file svg {
  width: 30px;
  height: 32px;
}
.rail-tools {
  margin-top: 472px;
  display: flex;
  flex-direction: column;
  align-items: center;
  width: 100%;
}
.rail-tools hr {
  width: 48px;
  margin: 31px 0 35px;
  border: 0;
  border-top: 1px solid #2b3245;
}
.rail-item {
  height: 30px;
  width: 32px;
  margin-bottom: 42px;
  position: relative;
  display: flex;
  align-items: center;
  justify-content: center;
}
.rail-item.first {
  margin-bottom: 0;
}
.rail-item svg {
  width: 32px;
  height: 30px;
}
.rail-item i {
  position: absolute;
  left: -12px;
  top: 12px;
  width: 6px;
  height: 6px;
  border-radius: 50%;
  background: #9a9a9a;
}
.purple { color: var(--agent); }
.white { color: #f5f9fc; }
.yellow { color: #f5d37a; }
.blue { color: #b4d4fb; }
.green { color: #8fe08f; }
.lime { color: #c5de7a; }
.rail-help {
  margin-top: auto;
  margin-bottom: 8px;
  font-size: 36px;
  line-height: 44px;
  color: #f5f9fc;
}

/* panels */
.panel {
  background: var(--panel);
  border-radius: 8px;
  display: flex;
  flex-direction: column;
  overflow: hidden;
  position: relative;
}
.agent-panel {
  width: 1126px;
}
.resizer {
  width: 12px;
  display: flex;
  align-items: center;
  justify-content: center;
}
.resizer i {
  width: 4px;
  height: 46px;
  margin-bottom: 50px;
  border-radius: 2px;
  background: #2b3245;
}
.preview-panel {
  width: 1690px;
}
.panel-tabs {
  height: 64px;
  background: var(--panel-dark);
  border-bottom: 2px solid #2b3245;
  display: flex;
  align-items: center;
  position: relative;
}
.panel-tab {
  height: 64px;
  background: var(--panel);
  display: flex;
  align-items: center;
  font-size: 26.5px;
}
.agent-tab {
  width: 192px;
  margin-left: 2px;
  padding-left: 10px;
  border-top: 3px solid #0079f2;
  border-right: 2px solid #2b3245;
}
.tab-agent {
  width: 32px;
  height: 32px;
  color: var(--agent);
}
.agent-tab span {
  margin-left: 12px;
}
.tab-close {
  width: 20px;
  height: 20px;
  color: #b0b4bd;
  margin-left: auto;
  margin-right: 10px;
}
.tab-plus {
  width: 24px;
  height: 24px;
  margin-left: 20px;
  color: #d5d8de;
}
.panel-dots {
  width: 8px;
  height: 28px;
  margin-left: auto;
  margin-right: 28px;
  color: #b0b4bd;
}
.preview-tab {
  width: 201px;
  padding-left: 13px;
  border-right: 2px solid #2b3245;
}
.tab-mon {
  width: 30px;
  height: 30px;
}
.preview-tab span {
  margin-left: 13px;
}

/* history bar */
.historybar {
  height: 60px;
  margin: 16px 17px 0;
  padding: 0 16px 0 18px;
  border: 2px solid var(--line);
  border-radius: 14px;
  background: var(--raised);
  display: grid;
  grid-template-columns: 1fr auto 1fr;
  align-items: center;
  font-size: 24.6px;
  color: #c2c8cc;
}
.hist-left, .hist-mid, .hist-right {
  display: flex;
  align-items: center;
}
.hist-left svg {
  width: 24px;
  height: 24px;
  margin-right: 7px;
}
.hist-mid {
  color: #f5f9fc;
  font-weight: 500;
  gap: 18px;
  margin-right: 14px;
}
.hist-mid svg {
  width: 28px;
  height: 24px;
}
.hist-right {
  justify-content: flex-end;
  font-size: 24px;
}
.hist-right svg {
  width: 22px;
  height: 22px;
  margin-right: 9px;
}

/* chat column */
.chat {
  flex: 1;
  padding: 0 40px 0 40px;
  font-size: 28.2px;
  line-height: 44.7px;
}
.faded {
  line-height: 32px;
  color: #8e929b;
}
.shot-row {
  height: 46px;
  margin-top: 20px;
  display: flex;
  align-items: center;
  color: #c2c8cc;
}
.cam {
  width: 32px;
  height: 30px;
  margin: 0 12px 0 2px;
}
.shot-chev {
  width: 24px;
  height: 24px;
  margin-left: auto;
  margin-right: 5px;
  color: #b0b4bd;
}
.checkpoint {
  width: 1061px;
  height: 259px;
  margin: 22px 0 0 -8px;
  padding: 24px 24px 0 25px;
  border: 2px solid #39454f;
  border-radius: 16px;
  display: flex;
}
.check {
  width: 30px;
  height: 30px;
  margin-top: 2px;
}
.cp-body {
  width: 740px;
  margin-left: 17px;
}
.cp-meta {
  height: 36px;
  font-size: 24.3px;
  line-height: 36px;
  color: #c2c8cc;
  display: flex;
  align-items: center;
}
.cp-meta i {
  width: 6px;
  height: 6px;
  margin: 0 14px;
  border-radius: 50%;
  background: #c2c8cc;
}
.cp-meta b {
  font-weight: 400;
  color: #6fd27c;
}
.cp-title {
  margin-top: 10px;
  line-height: 44px;
  font-size: 28.2px;
  color: #f5f9fc;
}
.cp-actions {
  margin-top: 19px;
  display: flex;
  gap: 17px;
}
.cp-actions button {
  height: 55px;
  padding: 0 16px;
  border: 2px solid #39454f;
  border-radius: 8px;
  background: none;
  font-size: 24.2px;
  display: flex;
  align-items: center;
  gap: 9px;
}
.cp-actions button:last-child {
  padding-right: 14px;
}
.cp-actions svg {
  width: 24px;
  height: 24px;
}
.thumb {
  width: 198px;
  height: 142px;
  margin: 32px 0 0 auto;
  border-radius: 8px;
  background: #fff;
  overflow: hidden;
}
.para {
  margin-top: 32px;
  color: #f5f9fc;
}
.para.first {
  margin-top: 40px;
}
.para.checks {
  margin-top: 35px;
  line-height: 44.3px;
}
.para.checks b {
  font-weight: 700;
}
.steps {
  margin-top: 32px;
  list-style: none;
}
.steps li {
  height: 52px;
  line-height: 44.7px;
}
.steps + .para {
  margin-top: 25px;
}
.suggest-row {
  margin-top: 17px;
  display: flex;
  gap: 16px;
}
.para + .suggest-row {
  margin-top: 15px;
}
.suggest {
  height: 55px;
  padding: 0 16px;
  border: 2px solid var(--line);
  border-radius: 6px;
  background: var(--panel-dark);
  font-size: 24.1px;
  white-space: nowrap;
}
.suggest.wide {
  font-size: 24.4px;
}
.suggest.more {
  padding: 0 17px;
  border-color: var(--raised);
  background: var(--raised);
  display: flex;
  align-items: center;
  gap: 10px;
}
.suggest.more svg {
  width: 18px;
  height: 18px;
}

/* composer */
.composer {
  height: 150px;
  margin: 0 17px 16px 17px;
  padding: 19px 12px 0 20px;
  border: 2px solid var(--line);
  border-radius: 12px;
  background: var(--raised);
}
.composer-ph {
  font-size: 27.8px;
  line-height: 40px;
  color: #9a9ea8;
}
.composer-foot {
  margin-top: 27px;
  display: flex;
  align-items: center;
  color: #c2c8cc;
}
.clip {
  width: 22px;
  height: 30px;
}
.select {
  margin-left: 33px;
  font-size: 24.5px;
  display: flex;
  align-items: center;
  gap: 10px;
}
.select svg {
  width: 28px;
  height: 28px;
}
.send {
  width: 48px;
  height: 48px;
  margin-left: auto;
  border-radius: 8px;
  background: #3d3e42;
  color: #85888e;
  display: flex;
  align-items: center;
  justify-content: center;
}
.send svg {
  width: 30px;
  height: 30px;
}

/* preview url row */
.urlbar {
  height: 72px;
  padding: 1px 0 0 20px;
  background: var(--panel);
  border-bottom: 2px solid #2b3245;
  display: flex;
  align-items: center;
}
.pv-nav {
  width: 24px;
  height: 24px;
  margin-right: 31px;
}
.pv-nav.dim {
  color: #9da2b0;
}
.pv-reload {
  width: 28px;
  height: 28px;
  margin-left: 1px;
}
.pv-url {
  width: 1346px;
  height: 48px;
  margin-left: 16px;
  border-radius: 6px;
  background: var(--raised);
  display: flex;
  align-items: center;
  padding-left: 8px;
  font-size: 25.8px;
}
.link {
  width: 22px;
  height: 22px;
  color: #6fd27c;
  margin-right: 6px;
}
.host {
  color: #6fd27c;
}
.go {
  width: 20px;
  height: 20px;
  margin-left: auto;
  margin-right: 16px;
  color: #9da2b0;
}
.pv-tool {
  color: #c2c8cc;
}
.pv-tool.mon {
  width: 30px;
  height: 30px;
  margin-left: 19px;
}
.wrench {
  width: 24px;
  height: 28px;
  margin-left: 22px;
  color: #c2c8cc;
  position: relative;
}
.wrench svg {
  width: 24px;
  height: 28px;
}
.wrench b {
  position: absolute;
  left: 10px;
  top: -13px;
  width: 28px;
  height: 28px;
  border-radius: 50%;
  background: #ee6a6a;
  color: #4a0a0a;
  font-size: 22px;
  font-weight: 400;
  line-height: 28px;
  text-align: center;
}
.pv-tool.ext {
  width: 26px;
  height: 26px;
  margin-left: 30px;
}

/* signup page in the preview */
.page {
  flex: 1;
  background: #fcfcfd;
  padding-top: 61px;
  display: flex;
  justify-content: center;
  align-items: flex-start;
  position: relative;
  overflow: hidden;
  font-family: Inter, "Open Sans", sans-serif;
  color: var(--muted);
}
.card {
  width: 896px;
  height: 1290px;
  padding: 48px 47px 0;
  border: 3px solid #e6e6ec;
  border-radius: 24px;
  background: #fff;
  box-shadow: 0 2px 4px rgba(0, 0, 0, 0.08);
}
h1 {
  font-size: 50px;
  font-weight: 800;
  line-height: 60px;
  text-align: center;
  color: var(--purple);
}
.sub {
  margin-top: 3px;
  font-size: 30px;
  line-height: 40px;
  text-align: center;
}
.google-ring {
  margin: 70px -9px 0;
  height: 95px;
  padding: 5px;
  border: 5px solid var(--purple);
  border-radius: 24px;
}
.google-btn {
  width: 100%;
  height: 75px;
  border: 0;
  border-radius: 16px;
  background: #e77b43;
  color: #fff;
  font-size: 29.5px;
  font-weight: 500;
  display: flex;
  align-items: center;
  justify-content: center;
  gap: 34px;
}
.google-btn svg {
  width: 28px;
  height: 28px;
}
.divider {
  margin-top: 28px;
  height: 30px;
  display: flex;
  align-items: center;
  gap: 17px;
  font-size: 22.8px;
  white-space: nowrap;
}
.divider::before,
.divider::after {
  content: "";
  flex: 1;
  height: 2px;
  background: #e4e4ea;
}
.field-label {
  display: block;
  margin-top: 40px;
  height: 36px;
  font-size: 29px;
  font-weight: 500;
  line-height: 36px;
  color: #0a0a0f;
}
.field {
  height: 71px;
  margin-top: 21px;
  padding: 0 24px 0 22px;
  border: 3px solid #f0f0f4;
  border-radius: 20px;
  box-shadow: 0 1px 2px rgba(0, 0, 0, 0.04);
  display: flex;
  align-items: center;
  font-size: 29.6px;
}
.select-field {
  height: 79px;
  color: #111;
}
.sel-chev {
  width: 24px;
  height: 24px;
  margin-left: auto;
  margin-right: 3px;
  color: #6b6480;
}
.field-icon {
  margin-right: 27px;
  color: var(--muted);
}
.field-icon.mail {
  width: 30px;
  height: 28px;
  margin-top: 18px;
}
.field-icon.lock {
  width: 28px;
  height: 30px;
  margin-top: 8px;
}
.field-eye {
  width: 30px;
  height: 30px;
  margin-left: auto;
  margin-right: -3px;
  color: var(--muted);
}
.submit {
  width: 100%;
  height: 80px;
  margin-top: 33px;
  border: 0;
  border-radius: 18px;
  background: var(--purple);
  color: #fff;
  font-size: 30px;
  font-weight: 500;
}
.signin {
  margin-top: 34px;
  font-size: 30px;
  line-height: 36px;
  text-align: center;
}
.signin a {
  color: var(--purple);
}
.toast {
  position: absolute;
  right: 32px;
  bottom: 32px;
  width: 776px;
  height: 309px;
  padding: 51px 0 0 50px;
  border-radius: 20px;
  background: #db524b;
  color: #fff;
  box-shadow: 0 16px 30px rgba(0, 0, 0, 0.14);
  overflow: hidden;
}
.toast-title {
  height: 40px;
  font-size: 29.7px;
  font-weight: 600;
  line-height: 40px;
  margin-bottom: 8px;
}
.toast-line {
  height: 40px;
  font-size: 28.7px;
  line-height: 40px;
  white-space: nowrap;
  color: #fde9e7;
}
.toast-line.tight {
  letter-spacing: -0.5px;
}
```
